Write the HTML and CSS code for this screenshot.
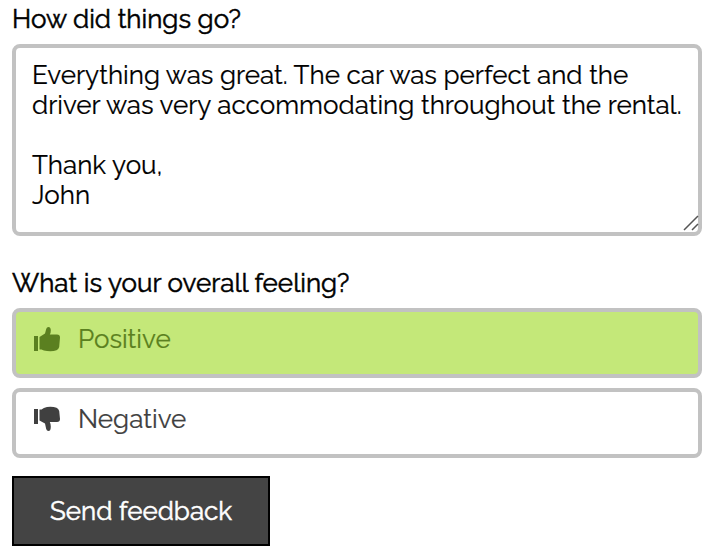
FILE: index.html
```
<!DOCTYPE html>
<html lang="en">
<head>
  <meta charset="UTF-8" />
  <meta name="viewport" content="width=device-width, initial-scale=1.0"/>
  <title>Feedback</title>
  <link rel="stylesheet" href="styles.css">
</head>
<body>
  <form class="feedback-form">
    <label class="field-label" for="comments">How did things go?</label>
    <div class="textarea-wrap">
      <textarea id="comments" name="comments" rows="5">Everything was great. The car was perfect and the driver was very accommodating throughout the rental.

Thank you,
John</textarea>
      <svg class="grip" viewBox="0 0 16 16" aria-hidden="true"><path d="M1 15L15 1M9 15L15 9"/></svg>
    </div>

    <fieldset class="feelings">
      <legend class="field-label">What is your overall feeling?</legend>

      <label class="option positive">
        <input type="radio" name="feeling" value="positive" checked>
        <svg class="icon" viewBox="0 0 27 26" aria-hidden="true">
          <path d="M1 10h4v15H1zM6.500 11L12 7.500L13.200 3Q13.700 1 15.500 1Q17.800 1 17.800 4.500Q17.800 7 16.800 8.500H24Q27 8.500 27 11.500L26.200 21Q25.500 23.500 23.500 24.300Q20 25.500 14 25Q10.500 24.500 8.500 23.500H6.500z"/>
        </svg>
        <span>Positive</span>
      </label>

      <label class="option negative">
        <input type="radio" name="feeling" value="negative">
        <svg class="icon" viewBox="0 0 27 26" aria-hidden="true">
          <path d="M1 3h4v15H1zM6.500 3.500H8.500Q10.500 1.500 14 1Q20 0.500 23.500 1.700Q25.500 2.500 26.200 5L27 13Q27 16 24 16H16.800Q17.800 18 17.800 20.500Q17.800 25 15.500 25Q13.700 25 13.200 23L12 17.500L6.500 14.500z"/>
        </svg>
        <span>Negative</span>
      </label>
    </fieldset>

    <button type="submit" class="send">Send feedback</button>
  </form>
</body>
</html>
```
FILE: styles.css
```
* { margin: 0; padding: 0; box-sizing: border-box; }

body {
  font-family: 'Raleway', 'Lato', sans-serif;
  font-size: 26px;
  line-height: 30px;
  background-color: #fff;
  color: #000;
  -webkit-text-stroke: 0.2px currentColor;
}

.feedback-form {
  padding: 4px 10px 8px 12px;
}

.field-label {
  display: block;
  margin-bottom: 10px;
  -webkit-text-stroke: 0.5px currentColor;
}

.textarea-wrap {
  position: relative;
  margin-bottom: 32px;
}

textarea {
  display: block;
  width: 100%;
  height: 192px;
  padding: 12px 16px;
  border: 4px solid #c2c2c2;
  border-radius: 8px;
  background-color: #fff;
  color: #000;
  font: inherit;
  overflow: hidden;
  resize: none;
}

/* Resize handle in the corner of the text box */
.grip {
  position: absolute;
  right: 3px;
  bottom: 5px;
  width: 16px;
  height: 16px;
  fill: none;
  stroke: #555;
  stroke-width: 1.5;
  pointer-events: none;
}

.feelings {
  border: none;
  margin-bottom: 18px;
}

.option {
  display: flex;
  align-items: center;
  gap: 18px;
  height: 70px;
  padding: 0 17px 8px;
  border: 4px solid #c2c2c2;
  border-radius: 8px;
  color: #404040;
  cursor: pointer;
}

.option + .option {
  margin-top: 10px;
}

.option input {
  position: absolute;
  opacity: 0;
}

.option.positive:has(input:checked) {
  background-color: #c4e879;
  color: #5b8020;
}

.option.negative:has(input:checked) {
  background-color: #f4b4a8;
  color: #8a2c1c;
}

.icon {
  width: 27px;
  height: 26px;
  fill: currentColor;
}

.send {
  display: block;
  padding: 18px 36px;
  border: 2px solid #000;
  background-color: #444;
  color: #fff;
  font: inherit;
  cursor: pointer;
  -webkit-text-stroke: 0.5px currentColor;
}
```
